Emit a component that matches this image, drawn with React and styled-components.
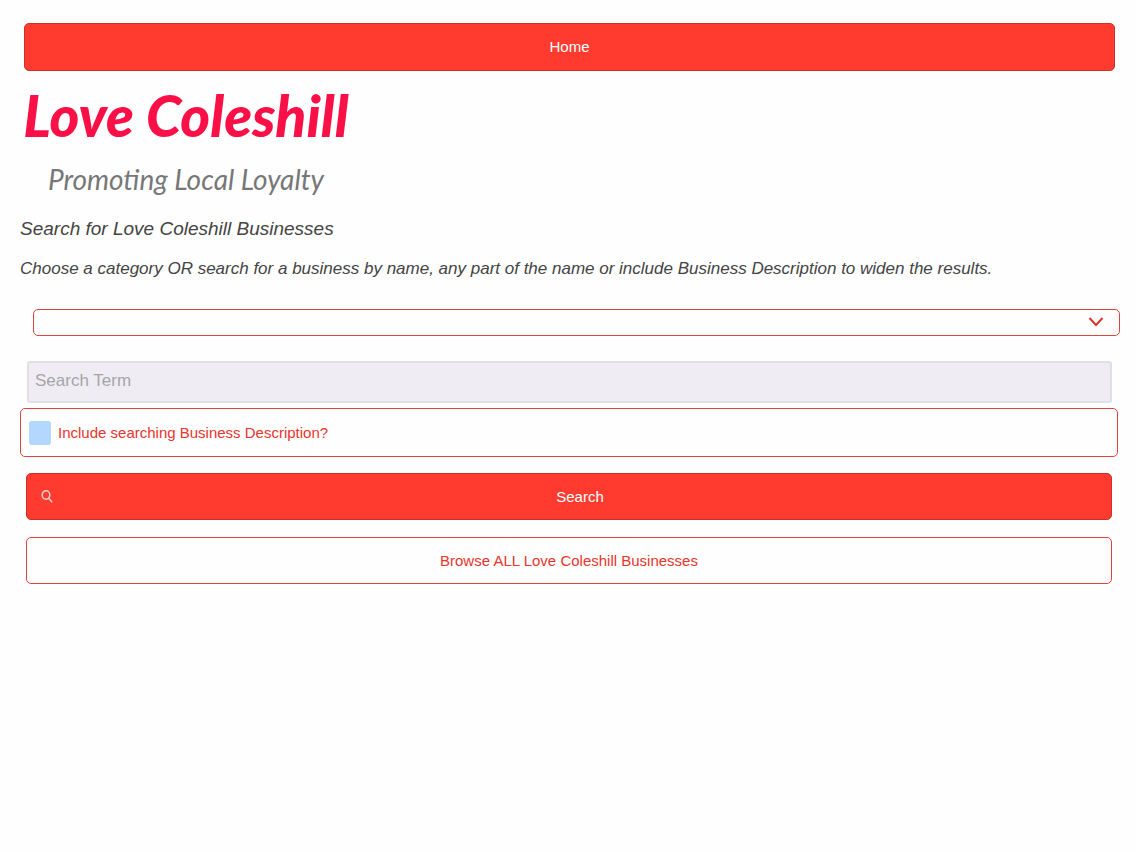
import { createGlobalStyle, styled } from "styled-components";

const App = () => {
  return (
    <>
      <GlobalStyle />
      <Page>
        {/* HEADER */}
        <header>
          <HomeLink href="#home">Home</HomeLink>
          <Logo>
            <LogoName>Love Coleshill</LogoName>
            <LogoTagline>Promoting Local Loyalty</LogoTagline>
          </Logo>
        </header>
        {/* SEARCH */}
        <main>
          <Title>Search for Love Coleshill Businesses</Title>
          <Intro>
            Choose a category OR search for a business by name, any part of the
            name or include Business Description to widen the results.
          </Intro>
          <form onSubmit={(e) => e.preventDefault()}>
            <SelectBox>
              <Select aria-label="Category" defaultValue="">
                <option value=""></option>
              </Select>
              <Chevron viewBox="0 0 16 10" aria-hidden="true">
                <path d="M1.5 1 L8 8 L14.5 1" />
              </Chevron>
            </SelectBox>
            <SearchInput
              type="text"
              placeholder="Search Term"
              aria-label="Search Term"
            />
            <CheckLabel>
              <Checkbox type="checkbox" />
              Include searching Business Description?
            </CheckLabel>
            <Actions>
              <Button type="submit" $primary>
                <SearchIcon viewBox="0 0 12 13" aria-hidden="true">
                  <ellipse cx="5" cy="5" rx="3.8" ry="4.2" />
                  <path d="M7.4 8 L11.2 12.2" />
                </SearchIcon>
                <ButtonText>Search</ButtonText>
              </Button>
              <Button type="button">
                <ButtonText>Browse ALL Love Coleshill Businesses</ButtonText>
              </Button>
            </Actions>
          </form>
        </main>
      </Page>
    </>
  );
};

const GlobalStyle = createGlobalStyle`
  * {
    box-sizing: border-box;
  }
  body {
    margin: 0;
    background: #fefefe;
    color: #444;
    font-family: "Liberation Sans", Arial, sans-serif;
  }
  button, input, select {
    font-family: inherit;
  }
`;

const Page = styled.div`
  padding: 23px 16px 24px 20px;
`;

const HomeLink = styled.a`
  display: flex;
  align-items: center;
  justify-content: center;
  height: 48px;
  margin: 0 5px 0 4px;
  padding-bottom: 2px;
  border: 1px solid #c8322b;
  border-radius: 5px;
  background: #ff3b30;
  color: #fff;
  font-size: 15px;
  text-decoration: none;
`;

const Logo = styled.div`
  display: flex;
  flex-direction: column;
  align-items: center;
  width: 332px;
  padding-top: 8px;
  font-family: Lato, "Liberation Sans", sans-serif;
  font-style: italic;
  white-space: nowrap;
`;

const LogoName = styled.span`
  color: #fa0f46;
  font-size: 57px;
  font-weight: 900;
  line-height: 72px;
`;

const LogoTagline = styled.span`
  color: #777;
  font-size: 28px;
  line-height: 56px;
`;

const Title = styled.h1`
  margin: 4px 0 0;
  font-size: 19px;
  font-style: italic;
  font-weight: 400;
  line-height: 36px;
`;

const Intro = styled.p`
  margin: 8px 0 0;
  font-size: 17px;
  font-style: italic;
  line-height: 28px;
`;

const SelectBox = styled.div`
  position: relative;
  margin: 26px 0 0 13px;
`;

const Select = styled.select`
  display: block;
  width: 100%;
  height: 27px;
  border: 1px solid #e0443c;
  border-radius: 5px;
  background: transparent;
  appearance: none;
`;

const Chevron = styled.svg`
  position: absolute;
  top: 8px;
  right: 16px;
  width: 16px;
  height: 10px;
  fill: none;
  stroke: #e0332c;
  stroke-width: 2;
  pointer-events: none;
`;

const SearchInput = styled.input`
  display: block;
  width: calc(100% - 15px);
  height: 42px;
  margin: 25px 0 5px 7px;
  padding: 0 6px 2px;
  border: 2px solid #e1dfe3;
  border-radius: 3px;
  background: #efedf3;
  color: #444;
  font-size: 17px;

  &::placeholder {
    color: #a5a5a9;
    opacity: 1;
  }
`;

const CheckLabel = styled.label`
  display: flex;
  align-items: center;
  gap: 7px;
  height: 49px;
  margin-right: 2px;
  padding-left: 8px;
  border: 1px solid #e0443c;
  border-radius: 5px;
  color: #e8352d;
  font-size: 15px;
`;

const Checkbox = styled.input`
  width: 22px;
  height: 24px;
  margin: 0;
  border-radius: 3px;
  background: #b3d7ff;
  appearance: none;

  &:checked {
    background: #5aa5f5;
  }
`;

const Actions = styled.div`
  display: grid;
  gap: 17px;
  margin: 16px 8px 0 6px;
`;

const Button = styled.button`
  display: flex;
  align-items: center;
  height: 47px;
  padding: 0 4px 0 ${({ $primary }) => ($primary ? "14px" : "4px")};
  border: 1px solid ${({ $primary }) => ($primary ? "#c8322b" : "#e0443c")};
  border-radius: 5px;
  background: ${({ $primary }) => ($primary ? "#ff3b30" : "#fefefe")};
  color: ${({ $primary }) => ($primary ? "#fff" : "#e8352d")};
  font-size: 15px;
`;

const ButtonText = styled.span`
  flex: 1;
  text-align: center;
`;

const SearchIcon = styled.svg`
  width: 12px;
  height: 13px;
  fill: none;
  stroke: #ffd0cc;
  stroke-width: 1.5;
`;

export default App;
